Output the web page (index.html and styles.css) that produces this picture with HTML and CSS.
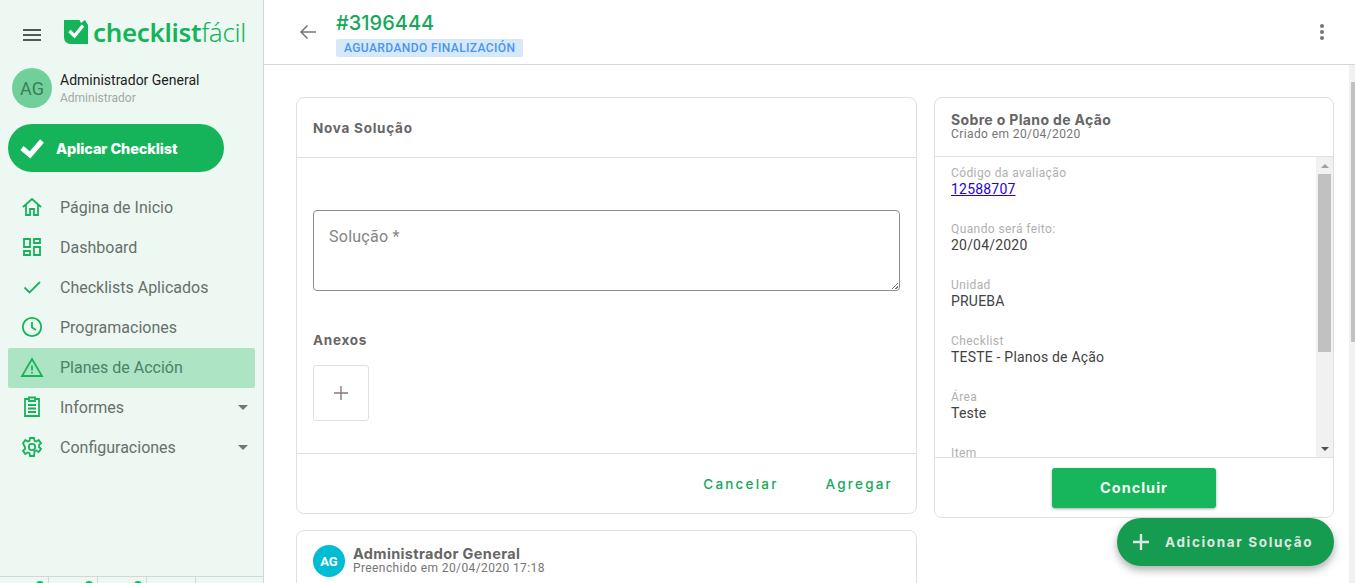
FILE: index.html
```html
<!DOCTYPE html>
<html lang="pt">
<head>
<meta charset="utf-8">
<title>Plano de Ação</title>
<link rel="stylesheet" href="styles.css">
</head>
<body>
<div class="app">
  <aside class="sidebar">
    <div class="brand">
      <svg class="burger" viewBox="0 0 18 12" width="18" height="12"><path d="M0 1h18M0 6h18M0 11h18" stroke="#222" stroke-width="1.600" fill="none"/></svg>
      <svg class="logo-mark" viewBox="0 0 24 24" width="24" height="24"><path d="M0 0h15.500l1.500 3 4-3 3 5v19H7q-7 0-7-7z" fill="#16b45a"/><path d="M5.500 11l5 5L19 5.500" stroke="#fff" stroke-width="3.200" fill="none"/></svg>
      <span class="logo-text"><b>checklist</b>fácil</span>
    </div>
    <div class="user">
      <div class="avatar">AG</div>
      <div class="user-text">
        <div class="user-name">Administrador General</div>
        <div class="user-role">Administrador</div>
      </div>
    </div>
    <button class="apply">
      <svg viewBox="0 0 26 22" width="26" height="22"><path d="M3 11l8 7L23 4" stroke="#fff" stroke-width="5" fill="none"/></svg>
      <span>Aplicar Checklist</span>
    </button>
    <nav class="menu">
      <a class="item"><svg viewBox="0 0 24 24" width="24" height="24"><path d="M3 12l9-8 9 8M6 10v10h4v-6h4v6h4V10" class="ic"/></svg><span>Página de Inicio</span></a>
      <a class="item"><svg viewBox="0 0 24 24" width="24" height="24"><path d="M4 4h6v8H4zM14 4h6v4h-6zM14 12h6v8h-6zM4 16h6v4H4z" class="ic"/></svg><span>Dashboard</span></a>
      <a class="item"><svg viewBox="0 0 24 24" width="24" height="24"><path d="M4.500 12.500l5 5L20 7" class="ic"/></svg><span>Checklists Aplicados</span></a>
      <a class="item"><svg viewBox="0 0 24 24" width="24" height="24"><circle cx="12" cy="12" r="9.200" class="ic"/><path d="M12 7v5.500l4 2.500" class="ic"/></svg><span>Programaciones</span></a>
      <a class="item active"><svg viewBox="0 0 24 24" width="24" height="24"><path d="M12 4L2 21h20zM12 10.500v5M12 17v1.500" class="ic"/></svg><span>Planes de Acción</span></a>
      <a class="item"><svg viewBox="0 0 24 24" width="24" height="24"><path d="M9 4H5v17h14V4h-4M9 2.500h6v3.500H9zM8 10h8M8 13.500h8M8 17h8" class="ic"/></svg><span>Informes</span><i class="caret"></i></a>
      <a class="item"><svg viewBox="0 0 24 24" width="24" height="24"><circle cx="12" cy="12" r="3.200" class="ic"/><path d="M10 3h4l.5 2.800 1.800.8 2.400-1.600 2.300 3.200-2 1.800v2l2 1.800-2.300 3.200-2.400-1.600-1.800.8L14 21h-4l-.5-2.800-1.800-.8-2.400 1.600L3 15.800 5 14v-2L3 8.200 5.300 5l2.400 1.600 1.800-.8z" class="ic"/></svg><span>Configuraciones</span><i class="caret"></i></a>
    </nav>
    <div class="sidebar-foot">
      <div class="foot-cell"><i class="dot"></i></div>
      <div class="foot-cell"><i class="dot"></i></div>
      <div class="foot-cell"><i class="dot"></i></div>
      <div class="foot-cell"></div>
      <div class="foot-cell"></div>
    </div>
  </aside>
  <main class="main">
    <header class="topbar">
      <svg class="back" viewBox="0 0 18 16" width="18" height="16"><path d="M17 8H2M8.500 1.500L2 8l6.500 6.500" stroke="#757575" stroke-width="1.500" fill="none"/></svg>
      <div class="title-block">
        <div class="title">#3196444</div>
        <div class="badge">AGUARDANDO FINALIZACIÓN</div>
      </div>
      <div class="kebab"><i></i><i></i><i></i></div>
    </header>
    <div class="body-row">
      <div class="content">
        <section class="left">
          <div class="card form-card">
            <div class="card-head"><h2>Nova Solução</h2></div>
            <div class="form-body">
              <div class="solution">Solução *<span class="grip"></span></div>
              <h3>Anexos</h3>
              <div class="add-file"><svg viewBox="0 0 14 14" width="14" height="14"><path d="M7 0v14M0 7h14" stroke="#8a7a7a" stroke-width="1.400"/></svg></div>
            </div>
            <div class="form-actions">
              <span class="link">Cancelar</span>
              <span class="link">Agregar</span>
            </div>
          </div>
          <div class="card comment">
            <div class="comment-avatar">AG</div>
            <div>
              <div class="comment-name">Administrador General</div>
              <div class="comment-date">Preenchido em 20/04/2020 17:18</div>
            </div>
          </div>
        </section>
        <section class="right">
          <div class="card about">
            <div class="about-head">
              <h2>Sobre o Plano de Ação</h2>
              <div class="about-date">Criado em 20/04/2020</div>
            </div>
            <div class="about-scroll">
              <div class="about-list">
                <div class="field"><div class="label">Código da avaliação</div><a class="value code">12588707</a></div>
                <div class="field"><div class="label">Quando será feito:</div><div class="value">20/04/2020</div></div>
                <div class="field"><div class="label">Unidad</div><div class="value">PRUEBA</div></div>
                <div class="field"><div class="label">Checklist</div><div class="value">TESTE - Planos de Ação</div></div>
                <div class="field"><div class="label">Área</div><div class="value">Teste</div></div>
                <div class="field"><div class="label">Item</div></div>
              </div>
              <div class="inner-bar">
                <i class="arrow up"></i>
                <div class="inner-track"><div class="inner-thumb"></div></div>
                <i class="arrow down"></i>
              </div>
            </div>
            <div class="about-foot"><button class="conclude">Concluir</button></div>
          </div>
        </section>
      </div>
      <div class="page-bar"><div class="page-thumb"></div></div>
    </div>
    <button class="fab">
      <svg viewBox="0 0 16 16" width="16" height="16"><path d="M8 0v16M0 8h16" stroke="#dfe6e0" stroke-width="2.400"/></svg>
      <span>Adicionar Solução</span>
    </button>
  </main>
</div>
</body>
</html>
```
FILE: styles.css
```css
* { box-sizing: border-box; }
html, body { margin: 0; height: 100%; overflow: hidden; }
body { font-family: Roboto, "Liberation Sans", sans-serif; color: #333; background: #fff; }
.app { display: flex; width: 1355px; height: 583px; overflow: hidden; }

.sidebar { width: 264px; flex: none; height: 583px; background: #eef8f3; border-right: 1px solid #d6d6d6; display: flex; flex-direction: column; }
.brand { display: flex; align-items: center; height: 64px; padding: 0 0 0 23px; }
.burger { flex: none; margin-top: 5px; }
.logo-mark { margin-left: 23px; flex: none; }
.logo-text { margin-left: 5px; font-family: "Noto Sans", sans-serif; font-size: 26px; letter-spacing: -0.35px; color: #16b45a; line-height: 30px; font-weight: 300; white-space: nowrap; }
.logo-text b { font-weight: 600; }
.user { display: flex; align-items: center; padding: 4px 0 0 12px; height: 44px; }
.avatar { width: 40px; height: 40px; border-radius: 50%; background: #6fd09a; color: #3c7d5c; font-size: 18px; display: flex; align-items: center; justify-content: center; }
.user-text { margin-left: 8px; }
.user-name { font-size: 14px; line-height: 18px; color: #212121; }
.user-role { font-size: 12px; line-height: 16px; margin-top: 1px; color: #a3aaa6; }
.apply { margin: 16px 0 0 8px; width: 216px; height: 48px; border: 0; border-radius: 24px; background: #16b45a; display: flex; align-items: center; padding: 0 0 0 11px; color: #fff; font-family: Inter, sans-serif; font-weight: 800; font-size: 14.500px; letter-spacing: -0.1px; flex: none; }
.apply span { margin-left: 11px; }
.menu { display: flex; flex-direction: column; margin-top: 16px; padding: 0 8px; }
.item { display: flex; align-items: center; height: 40px; padding: 0 0 2px 12px; border-radius: 2px; font-size: 16px; color: #66706b; }
.item svg { flex: none; }
.item span { margin-left: 16px; flex: 1; }
.item.active { background: #ace4c4; color: #4b8166; }
.ic { fill: none; stroke: #16b45a; stroke-width: 1.800; }
.caret { width: 0; height: 0; border-left: 5px solid transparent; border-right: 5px solid transparent; border-top: 5px solid #757575; margin-right: 7px; }
.sidebar-foot { margin-top: auto; height: 7px; border-top: 1px solid #d6d6d6; display: flex; }
.foot-cell { width: 49px; height: 6px; border-right: 1px solid #d6d6d6; position: relative; overflow: hidden; }
.foot-cell:last-child { flex: 1; border-right: 0; }
.dot { position: absolute; right: 4px; top: 4px; width: 8px; height: 8px; border-radius: 50%; background: #16b45a; }

.main { flex: 1; min-width: 0; position: relative; display: flex; flex-direction: column; height: 583px; }
.topbar { height: 65px; flex: none; border-bottom: 1px solid #d6d6d6; display: flex; align-items: center; padding: 0 0 0 35px; }
.back { flex: none; margin-top: -1px; }
.title-block { margin-left: 19px; display: flex; flex-direction: column; align-items: flex-start; }
.title { font-family: Inter, sans-serif; font-size: 20px; line-height: 26px; font-weight: 500; color: #16a85a; margin-top: 2px; }
.badge { margin-top: 3px; height: 18px; padding: 0 8px; background: #d5e9fb; border-radius: 2px; color: #4a95ee; font-size: 12px; line-height: 18px; font-weight: 500; letter-spacing: 0.4px; }
.kebab { margin-left: auto; margin-right: 31px; display: flex; flex-direction: column; gap: 2px; }
.kebab i { width: 4px; height: 4px; border-radius: 50%; background: #757575; display: block; }

.body-row { flex: 1; min-height: 0; display: flex; }
.content { flex: 1; min-width: 0; display: flex; gap: 17px; padding: 32px 0 0 32px; overflow: hidden; }
.left { width: 621px; flex: none; display: flex; flex-direction: column; gap: 16px; }
.right { width: 400px; flex: none; }
.card { background: #fff; border: 1px solid #e0e0e0; border-radius: 8px; }
.form-card { height: 417px; flex: none; display: flex; flex-direction: column; }
.card-head { height: 60px; flex: none; border-bottom: 1px solid #e0e0e0; display: flex; align-items: center; padding-left: 16px; }
h2, h3 { margin: 0; font-family: Inter, sans-serif; font-weight: 700; color: #666; }
.card-head h2 { font-size: 13.500px; letter-spacing: 0.75px; }
.form-body { flex: 1; padding: 52px 16px 0; }
.solution { height: 81px; border: 1px solid #8c8c8c; border-radius: 4px; padding: 15px; font-size: 16px; line-height: 22px; letter-spacing: 0.25px; color: #858585; position: relative; }
.grip { position: absolute; right: 1px; bottom: 1px; width: 8px; height: 8px; background: repeating-linear-gradient(135deg, transparent 0 1.500px, #777 1.500px 2.500px); clip-path: polygon(100% 0, 100% 100%, 0 100%); }
.form-body h3 { font-size: 13.500px; letter-spacing: 0.75px; line-height: 18px; margin-top: 40px; }
.add-file { width: 56px; height: 56px; margin-top: 16px; border: 1px solid #e0e0e0; border-radius: 3px; display: flex; align-items: center; justify-content: center; }
.form-actions { height: 60px; flex: none; border-top: 1px solid #e0e0e0; display: flex; justify-content: flex-end; align-items: center; gap: 47px; padding: 0 23px 0 0; }
.link { font-family: Inter, sans-serif; font-size: 13.500px; font-weight: 500; letter-spacing: 2.200px; color: #16a85a; }
.comment { height: 90px; flex: none; display: flex; align-items: flex-start; padding: 15px 16px; gap: 8px; }
.comment-avatar { width: 32px; height: 32px; border-radius: 50%; background: #00bcd4; color: #fff; font-weight: 700; font-size: 13px; display: flex; align-items: center; justify-content: center; flex: none; margin-top: -1px; }
.comment-name { font-family: Inter, sans-serif; font-weight: 700; font-size: 14.500px; line-height: 16px; letter-spacing: 0.35px; color: #666; }
.comment-date { font-size: 12px; line-height: 12px; color: #757575; letter-spacing: 0.4px; }

.about { height: 421px; display: flex; flex-direction: column; }
.about-head { height: 59px; flex: none; border-bottom: 1px solid #e0e0e0; padding: 15px 16px 0; }
.about-head h2 { font-size: 14px; line-height: 16px; letter-spacing: 0.35px; margin-top: -1px; }
.about-date { font-size: 12px; line-height: 12px; color: #757575; letter-spacing: 0.4px; }
.about-scroll { height: 301px; flex: none; display: flex; overflow: hidden; border-bottom: 1px solid #e0e0e0; }
.about-list { flex: 1; padding: 8px 16px 0; overflow: hidden; }
.field { height: 56px; }
.label { font-size: 12px; line-height: 16px; color: #b0b0b0; letter-spacing: 0.4px; }
.value { display: block; font-size: 14px; line-height: 16px; letter-spacing: 0.2px; color: #424242; }
.code { color: #2200ee; text-decoration: underline; }
.inner-bar { width: 17px; flex: none; background: #f1f1f1; display: flex; flex-direction: column; }
.arrow { height: 17px; flex: none; display: flex; align-items: center; justify-content: center; }
.arrow::before { content: ""; border-left: 4px solid transparent; border-right: 4px solid transparent; }
.arrow.up::before { border-bottom: 4px solid #a0a0a0; }
.arrow.down::before { border-top: 4px solid #505050; }
.inner-track { flex: 1; padding: 0 2px; }
.inner-thumb { height: 178px; background: #c1c1c1; }
.about-foot { flex: 1; display: flex; justify-content: center; padding-top: 10px; }
.conclude { width: 164px; height: 40px; border: 0; border-radius: 3px; background: #18b65c; color: #f4fbf6; font-family: Inter, sans-serif; font-weight: 700; font-size: 14.500px; letter-spacing: 1px; padding-bottom: 2px; box-shadow: 0 1px 3px rgba(0,0,0,.35); }

.page-bar { width: 6px; flex: none; background: #f1f1f1; padding: 17px 0 0 2px; }
.page-thumb { height: 260px; background: #c1c1c1; }

.fab { position: absolute; left: 853px; top: 518px; width: 217px; height: 48px; border: 0; border-radius: 24px; background: #169c51; color: #dfe6e0; display: flex; align-items: center; padding: 0 0 0 16px; font-family: Inter, sans-serif; font-weight: 700; font-size: 13.500px; letter-spacing: 1.650px; box-shadow: 0 4px 8px rgba(0,0,0,.32); }
.fab span { margin-left: 16px; }
```
